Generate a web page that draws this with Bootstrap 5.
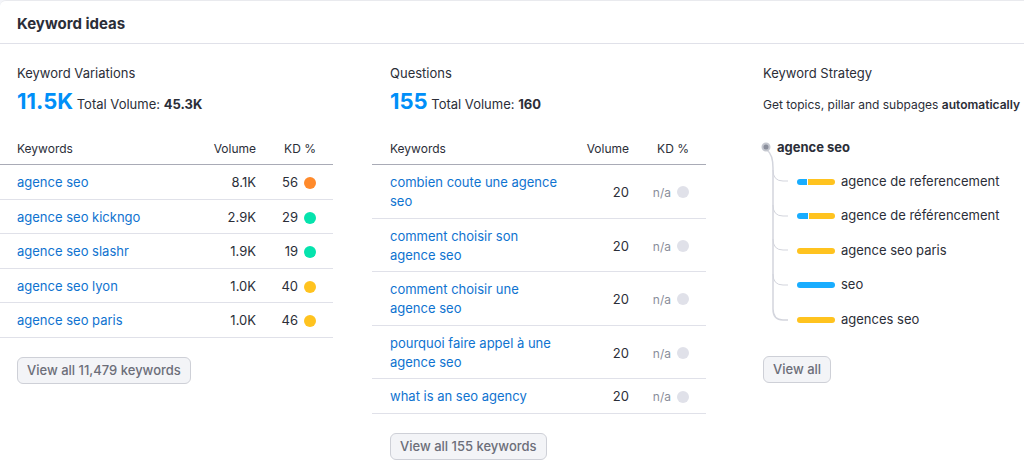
<!DOCTYPE html>
<html lang="en">
<head>
<meta charset="utf-8">
<meta name="viewport" content="width=device-width, initial-scale=1">
<title>Keyword ideas</title>
<link href="https://cdn.jsdelivr.net/npm/bootstrap@5.3.0/dist/css/bootstrap.min.css" rel="stylesheet">
<style>
  :root { --ink: #2b2e38; --line: #e0e1e9; --link: #0f73d0; --brand: #008ff8; --muted: #6c6e79; --gold: #ffc31f; --sky: #19adff; --edge: 18px; }
  body { font-family: Inter, "Liberation Sans", sans-serif; font-size: 13px; font-weight: 400; line-height: 19px; color: var(--ink); background: #f4f5f9; }
  .panel { border: 0; border-top: 1px solid #e9eaee; border-radius: 6px 0 0 0; color: var(--ink); min-height: 100vh; }
  .panel-head { padding: 14px 17px 11px; border-bottom: 1px solid var(--line); }
  .panel-head h1 { font-size: 15px; line-height: 17px; font-weight: 700; }
  .ideas { display: grid; grid-template-columns: 333fr 334fr 279fr; column-gap: 39px; padding-top: 20px; }
  .inset { padding-left: var(--edge); }
  .ideas > section:first-child { --edge: 17px; }
  h2 { font-size: 13px; line-height: 19px; font-weight: 400; }
  .summary { height: 38px; line-height: 36px; white-space: nowrap; }
  .total { font-size: 22px; font-weight: 700; color: var(--brand); text-decoration: none; }
  .summary b, .hint b { font-weight: 700; }
  .hint b { font-weight: 600; }
  .hint { font-size: 12px; height: 42px; line-height: 44px; white-space: nowrap; }
  .kw { --bs-table-color: var(--ink); color: var(--ink); table-layout: fixed; }
  .kw > thead th { font-size: 12px; line-height: 16px; font-weight: 400; padding: 20px 0 7px; border-bottom: 1px solid #a9abb6; }
  .kw > tbody td { padding: 8px 0 6px; border-bottom: 1px solid var(--line); vertical-align: middle; }
  .kw > tbody tr:nth-child(odd) td { padding-bottom: 7px; }
  .kw th:first-child, .kw td:first-child { padding-left: var(--edge) !important; }
  .kw .kd { width: 77px; padding-right: 17px !important; }
  .kw .vol { width: 60px; }
  .kw a { color: var(--link); text-decoration: none; }
  .kw .na { font-size: 12px; color: #8a8e9b; }
  .dot { display: inline-block; width: 12px; height: 12px; border-radius: 50%; margin-left: 6px; }
  .hard { background: #ff8a2b; } .easy { background: #05e3ad; } .medium { background: var(--gold); } .none { background: #e0e1e9; }
  .view { font-size: 13px; line-height: 19px; font-weight: 500; color: var(--muted); background: #f3f4f7; border: 1px solid #ced0d7; border-radius: 6px; padding: 3px 9px; margin-top: 19px; }
  .topic { display: flex; align-items: center; height: 29px; font-weight: 700; padding-left: 14px; }
  .tree { position: relative; padding: 3px 0 0 34px; }
  .tree li { display: flex; align-items: center; gap: 6px; padding: 7px 0 8px; white-space: nowrap; }
  .tree li:nth-child(even) { padding-bottom: 9px; }
  .wires { position: absolute; left: -2px; top: -22px; }
  .meter { display: flex; gap: 1px; width: 38px; height: 6px; border-radius: 3px; overflow: hidden; }
  .gold { background: var(--gold); flex: 1; } .sky { background: var(--sky); }
</style>
</head>
<body>
<main class="card panel">
  <header class="panel-head"><h1 class="m-0">Keyword ideas</h1></header>
  <div class="ideas">
    <section>
      <h2 class="inset m-0">Keyword Variations</h2>
      <p class="inset summary m-0"><a class="total" href="#">11.5K</a> Total Volume: <b>45.3K</b></p>
      <table class="table kw mb-0">
        <thead><tr><th>Keywords</th><th class="vol text-end">Volume</th><th class="kd text-end">KD %</th></tr></thead>
        <tbody>
          <tr><td><a href="#">agence seo</a></td><td class="text-end">8.1K</td><td class="kd"><div class="d-flex justify-content-end align-items-center">56<span class="dot hard"></span></div></td></tr>
          <tr><td><a href="#">agence seo kickngo</a></td><td class="text-end">2.9K</td><td class="kd"><div class="d-flex justify-content-end align-items-center">29<span class="dot easy"></span></div></td></tr>
          <tr><td><a href="#">agence seo slashr</a></td><td class="text-end">1.9K</td><td class="kd"><div class="d-flex justify-content-end align-items-center">19<span class="dot easy"></span></div></td></tr>
          <tr><td><a href="#">agence seo lyon</a></td><td class="text-end">1.0K</td><td class="kd"><div class="d-flex justify-content-end align-items-center">40<span class="dot medium"></span></div></td></tr>
          <tr><td><a href="#">agence seo paris</a></td><td class="text-end">1.0K</td><td class="kd"><div class="d-flex justify-content-end align-items-center">46<span class="dot medium"></span></div></td></tr>
        </tbody>
      </table>
      <div class="inset"><button type="button" class="btn view">View all 11,479 keywords</button></div>
    </section>
    <section>
      <h2 class="inset m-0">Questions</h2>
      <p class="inset summary m-0"><a class="total" href="#">155</a> Total Volume: <b>160</b></p>
      <table class="table kw mb-0">
        <thead><tr><th>Keywords</th><th class="vol text-end">Volume</th><th class="kd text-end">KD %</th></tr></thead>
        <tbody>
          <tr><td><a href="#">combien coute une agence seo</a></td><td class="text-end">20</td><td class="kd"><div class="na d-flex justify-content-end align-items-center">n/a<span class="dot none"></span></div></td></tr>
          <tr><td><a href="#">comment choisir son<br>agence seo</a></td><td class="text-end">20</td><td class="kd"><div class="na d-flex justify-content-end align-items-center">n/a<span class="dot none"></span></div></td></tr>
          <tr><td><a href="#">comment choisir une<br>agence seo</a></td><td class="text-end">20</td><td class="kd"><div class="na d-flex justify-content-end align-items-center">n/a<span class="dot none"></span></div></td></tr>
          <tr><td><a href="#">pourquoi faire appel à une<br>agence seo</a></td><td class="text-end">20</td><td class="kd"><div class="na d-flex justify-content-end align-items-center">n/a<span class="dot none"></span></div></td></tr>
          <tr><td><a href="#">what is an seo agency</a></td><td class="text-end">20</td><td class="kd"><div class="na d-flex justify-content-end align-items-center">n/a<span class="dot none"></span></div></td></tr>
        </tbody>
      </table>
      <div class="inset"><button type="button" class="btn view">View all 155 keywords</button></div>
    </section>
    <section class="inset">
      <h2 class="m-0">Keyword Strategy</h2>
      <p class="hint m-0 mb-2">Get topics, pillar and subpages <b>automatically</b></p>
      <div class="topic">agence seo</div>
      <div class="tree">
        <svg class="wires" width="30" height="188" viewBox="0 0 30 188" fill="none" stroke="#d3d5dd" aria-hidden="true">
          <path d="M6 10C10 13 12 20 12 28V169Q12 180 22 180H27" stroke-width="1.5"/>
          <path d="M12 30Q12 41 22 41H27M12 65Q12 76 22 76H27M12 99Q12 110 22 110H27M12 134Q12 145 22 145H27"/>
          <circle cx="5" cy="7" r="3.500" fill="#8a8e9b" stroke="#c4c7cf" stroke-width="2"/>
        </svg>
        <ul class="list-unstyled m-0">
          <li><span class="meter"><i class="sky" style="width:25%"></i><i class="gold"></i></span>agence de referencement</li>
          <li><span class="meter"><i class="sky" style="width:30%"></i><i class="gold"></i></span>agence de référencement</li>
          <li><span class="meter"><i class="gold"></i></span>agence seo paris</li>
          <li><span class="meter"><i class="sky" style="width:100%"></i></span>seo</li>
          <li><span class="meter"><i class="gold"></i></span>agences seo</li>
        </ul>
      </div>
      <button type="button" class="btn view">View all</button>
    </section>
  </div>
</main>
<script src="https://cdn.jsdelivr.net/npm/bootstrap@5.3.0/dist/js/bootstrap.bundle.min.js"></script>
</body>
</html>
